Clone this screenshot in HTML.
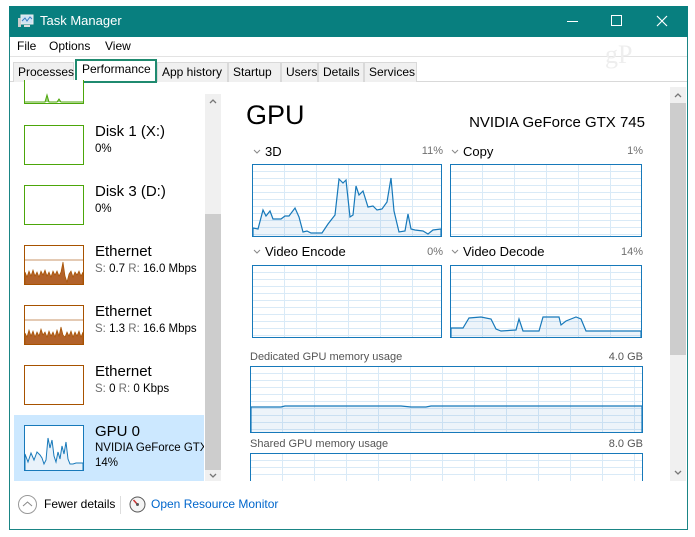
<!DOCTYPE html>
<html><head><meta charset="utf-8"><style>
*{box-sizing:border-box;margin:0;padding:0}
body{width:695px;height:537px;background:#fff;font-family:"Segoe UI","Liberation Sans",sans-serif;position:relative;overflow:hidden;color:#000}
.a{position:absolute}
.win{left:9px;top:6px;width:679px;height:524px;border:1px solid #1a8585;background:#fff}
.title{left:9px;top:6px;width:679px;height:31px;background:#087f7f;color:#fff;font-size:13px}
.menu span{position:absolute;font-size:12px;top:39px}
.tab{position:absolute;top:62px;height:20px;font-size:12px;border:1px solid #d9d9d9;border-bottom:none;background:#f0f0f0;padding:2px 4px 0 4px;white-space:nowrap}
.g{position:absolute;border:1px solid #1779ba;background-color:#fff;
background-image:repeating-linear-gradient(to right,transparent 0,transparent 31px,#d9eaf7 31px,#d9eaf7 32px),repeating-linear-gradient(to bottom,transparent 0,transparent 6px,#d9eaf7 6px,#d9eaf7 7px)}
.g svg{position:absolute;left:0;top:0}
.lbl{position:absolute;font-size:13px;color:#000}
.lbl svg{margin-right:4px;vertical-align:2px}
.pct{position:absolute;font-size:11px;color:#707070;text-align:right}
.th{position:absolute;left:24px;width:60px;height:40px;border:1px solid #4ca60a;background:#fff}
.tho{border-color:#a75200}
.it1{position:absolute;left:95px;font-size:15px}
.it2{position:absolute;left:95px;font-size:11.5px}
.s{color:#707070}
</style></head><body>
<div class="a win"></div>
<div class="a title">
 <svg class="a" style="left:9px;top:8px" width="16" height="14"><rect x="3" y="1" width="12" height="9" fill="#cfe3f3" stroke="#eee"/><polyline points="4,7 7,4 9,7 12,3 14,5" fill="none" stroke="#3a7fc1"/><rect x="0" y="4" width="3" height="9" fill="#ccc"/><rect x="6" y="11" width="6" height="2" fill="#ddd"/></svg>
 <span class="a" style="left:31px;top:7px;font-size:13px">Task Manager</span>
 <div class="a" style="left:558px;top:15px;width:11px;height:1px;background:#fff"></div>
 <div class="a" style="left:602px;top:9px;width:11px;height:11px;border:1px solid #fff"></div>
 <svg class="a" style="left:647px;top:9px" width="12" height="12"><path d="M1 1L11 11M11 1L1 11" stroke="#fff" stroke-width="1.2"/></svg>
</div>
<div class="menu"><span style="left:17px">File</span><span style="left:49px">Options</span><span style="left:105px">View</span></div>
<div class="a" style="left:10px;top:56px;width:677px;height:1px;background:#e3e3e3"></div>
<div class="a" style="left:10px;top:81px;width:677px;height:1px;background:#d9d9d9"></div>
<div class="tab" style="left:13px;width:61px">Processes</div>
<div class="tab" style="left:75px;top:59px;height:24px;width:82px;background:#fff;border:2px solid #1f8a6f;padding-top:1px;padding-left:5px">Performance</div>
<div class="tab" style="left:157px;width:71px">App history</div>
<div class="tab" style="left:228px;width:53px">Startup</div>
<div class="tab" style="left:281px;width:37px">Users</div>
<div class="tab" style="left:318px;width:46px">Details</div>
<div class="tab" style="left:364px;width:53px">Services</div>
<div class="a" style="left:605px;top:40px;font-family:'Liberation Serif',serif;font-size:26px;color:#eee">gP</div>

<!-- left list -->
<div class="th" style="top:80px;height:24px;border-top:none"><svg width="58" height="23"><polyline points="0,22 20,22 22,15 24,22 32,22 34,19 36,22 58,22" fill="#9bd07a" stroke="#4ca60a"/></svg></div>
<div class="th" style="top:125px"></div><div class="it1" style="top:123px">Disk 1 (X:)</div><div class="it2" style="top:143px">0%</div>
<div class="th" style="top:185px"></div><div class="it1" style="top:183px">Disk 3 (D:)</div><div class="it2" style="top:203px">0%</div>
<div class="th tho" style="top:245px"><svg width="58" height="38"><line x1="0" y1="14" x2="58" y2="14" stroke="#c9946a"/><polyline points="0,38 0,26 2,31 4,25 6,30 8,24 10,30 12,26 14,31 16,25 18,29 20,24 22,30 24,26 26,31 28,25 30,29 32,25 34,30 36,26 38,16 40,30 42,36 44,28 46,25 48,31 50,26 52,29 54,25 56,30 58,26 58,38" fill="#b2622a" stroke="#a75200" stroke-width=".7"/></svg></div>
<div class="it1" style="top:243px">Ethernet</div><div class="it2" style="top:263px"><span class="s">S:</span> 0.7 <span class="s">R:</span> 16.0 Mbps</div>
<div class="th tho" style="top:305px"><svg width="58" height="38"><line x1="0" y1="14" x2="58" y2="14" stroke="#c9946a"/><polyline points="0,38 0,27 2,31 4,24 6,30 8,25 10,31 12,26 14,30 16,23 18,29 20,26 22,31 24,25 26,30 28,26 30,31 32,24 34,30 36,21 38,29 40,31 42,26 44,30 46,25 48,31 50,26 52,30 54,25 56,31 58,26 58,38" fill="#b2622a" stroke="#a75200" stroke-width=".7"/></svg></div>
<div class="it1" style="top:303px">Ethernet</div><div class="it2" style="top:323px"><span class="s">S:</span> 1.3 <span class="s">R:</span> 16.6 Mbps</div>
<div class="th tho" style="top:365px"></div>
<div class="it1" style="top:363px">Ethernet</div><div class="it2" style="top:383px"><span class="s">S:</span> 0 <span class="s">R:</span> 0 Kbps</div>
<div class="a" style="left:14px;top:415px;width:190px;height:66px;background:#cce8ff"></div>
<div class="a" style="left:24px;top:425px;width:60px;height:46px;border:1px solid #1779ba;background:#fff"><svg width="58" height="44"><polyline points="0,44 0,28 3,36 6,27 9,34 12,26 15,29 17,32 19,38 21,34 23,12 25,22 27,14 29,30 31,36 33,26 35,33 37,20 39,28 41,16 43,33 45,38 48,38 51,37 58,37 58,44" fill="#e9f2fa" stroke="#1779ba"/></svg></div>
<div class="it1" style="top:423px">GPU 0</div><div class="it2" style="top:442px;white-space:nowrap;width:109px;overflow:hidden">NVIDIA GeForce GTX 745</div><div class="it2" style="top:457px">14%</div>
<!-- left scrollbar -->
<div class="a" style="left:205px;top:94px;width:16px;height:387px;background:#f0f0f0"></div>
<div class="a" style="left:205px;top:214px;width:16px;height:256px;background:#cdcdcd"></div>
<svg class="a" style="left:209px;top:99px" width="8" height="5"><path d="M1 4L4 1L7 4" fill="none" stroke="#777" stroke-width="1.3"/></svg>
<svg class="a" style="left:209px;top:473px" width="8" height="5"><path d="M1 1L4 4L7 1" fill="none" stroke="#777" stroke-width="1.3"/></svg>
<!-- right scrollbar -->
<div class="a" style="left:670px;top:87px;width:16px;height:394px;background:#f0f0f0"></div>
<div class="a" style="left:670px;top:103px;width:16px;height:252px;background:#cdcdcd"></div>
<svg class="a" style="left:674px;top:93px" width="8" height="5"><path d="M1 4L4 1L7 4" fill="none" stroke="#777" stroke-width="1.3"/></svg>
<svg class="a" style="left:674px;top:470px" width="8" height="5"><path d="M1 1L4 4L7 1" fill="none" stroke="#777" stroke-width="1.3"/></svg>

<!-- right panel -->
<div class="a" style="left:246px;top:100px;font-size:27px">GPU</div>
<div class="a" style="left:420px;top:114px;width:225px;text-align:right;font-size:15px">NVIDIA GeForce GTX 745</div>

<div class="lbl" style="left:253px;top:144px"><svg width="8" height="5"><path d="M1 1L4 4L7 1" fill="none" stroke="#888"/></svg>3D</div><div class="pct" style="left:400px;top:145px;width:43px">11%</div>
<div class="lbl" style="left:451px;top:144px"><svg width="8" height="5"><path d="M1 1L4 4L7 1" fill="none" stroke="#888"/></svg>Copy</div><div class="pct" style="left:600px;top:145px;width:43px">1%</div>
<div class="g" style="left:252px;top:164px;width:190px;height:73px"><svg width="188" height="71"><polyline points="0,71 0,63 5,64 10,45 13,51 17,46 20,54 28,54 32,51 36,51 42,43 46,52 50,67 54,66 58,68 69,68 75,59 82,50 86,14 90,18 93,15 97,52 100,50 103,21 106,30 110,26 115,42 120,41 124,45 129,44 134,37 138,13 141,46 146,67 152,66 155,49 158,64 162,65 170,66 175,69 180,65 188,64 188,71" fill="rgba(23,119,186,.08)" stroke="#1779ba" stroke-width="1.2"/></svg></div>
<div class="g" style="left:450px;top:164px;width:192px;height:73px"></div>

<div class="lbl" style="left:253px;top:244px"><svg width="8" height="5"><path d="M1 1L4 4L7 1" fill="none" stroke="#888"/></svg>Video Encode</div><div class="pct" style="left:400px;top:246px;width:43px">0%</div>
<div class="lbl" style="left:451px;top:244px"><svg width="8" height="5"><path d="M1 1L4 4L7 1" fill="none" stroke="#888"/></svg>Video Decode</div><div class="pct" style="left:600px;top:246px;width:43px">14%</div>
<div class="g" style="left:252px;top:265px;width:190px;height:73px"></div>
<div class="g" style="left:450px;top:265px;width:192px;height:73px"><svg width="190" height="71"><polyline points="0,71 0,62 12,62 18,52 30,51 40,53 45,63 50,65 65,64 68,53 72,65 88,65 92,51 108,51 110,59 115,55 125,51 130,53 135,65 190,65 190,71" fill="rgba(23,119,186,.08)" stroke="#1779ba" stroke-width="1.2"/></svg></div>

<div class="pct" style="left:250px;top:351px;color:#555;text-align:left">Dedicated GPU memory usage</div><div class="pct" style="left:580px;top:351px;width:63px;color:#555">4.0 GB</div>
<div class="g" style="left:250px;top:366px;width:393px;height:67px"><svg width="391" height="65"><polyline points="0,65 0,40 30,40 34,39 150,39 160,40 175,40 180,39 391,39 391,65" fill="rgba(23,119,186,.08)" stroke="#1779ba" stroke-width="1.2"/></svg></div>
<div class="pct" style="left:250px;top:438px;color:#555;text-align:left">Shared GPU memory usage</div><div class="pct" style="left:580px;top:438px;width:63px;color:#555">8.0 GB</div>
<div class="g" style="left:250px;top:453px;width:393px;height:29px;border-bottom:none"></div>
<div class="a" style="left:222px;top:481px;width:448px;height:6px;background:#fff"></div>

<!-- bottom -->
<div class="a" style="left:18px;top:495px;width:19px;height:19px;border:1px solid #999;border-radius:50%"></div>
<svg class="a" style="left:22px;top:500px" width="11" height="8"><path d="M1 6L5.5 2L10 6" fill="none" stroke="#888"/></svg>
<div class="a" style="left:44px;top:497px;font-size:12px">Fewer details</div>
<div class="a" style="left:120px;top:496px;width:1px;height:18px;background:#ddd"></div>
<svg class="a" style="left:129px;top:496px" width="17" height="17"><circle cx="8.5" cy="8.5" r="7.5" fill="#f4f4f4" stroke="#555"/><path d="M8.5 8.5L4.5 4" stroke="#c33" stroke-width="1.5"/><circle cx="8.5" cy="8.5" r="1.5" fill="#555"/></svg>
<div class="a" style="left:151px;top:497px;font-size:12px;color:#0066cc">Open Resource Monitor</div>
</body></html>
